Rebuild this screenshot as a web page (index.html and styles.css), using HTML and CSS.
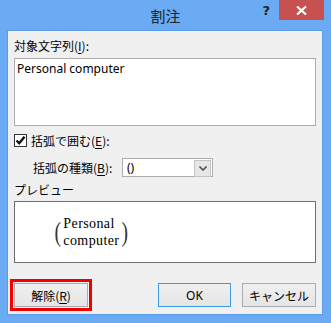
FILE: index.html
```html
<!DOCTYPE html>
<html lang="ja">
<head>
    <meta charset="UTF-8">
    <title>割注</title>
    <link rel="stylesheet" href="styles.css">
</head>
<body>
    <div class="window">
        <div class="titlebar">
            <div></div>
            <div class="title">割注</div>
            <div class="controls">
                <span class="help">?</span>
                <span class="close">
                    <svg width="11" height="9" viewBox="0 0 11 9"><path d="M1 0.5 L10 8.5 M10 0.5 L1 8.5" stroke="#fff" stroke-width="2.2"/></svg>
                </span>
            </div>
        </div>
        <div class="panel">
            <div class="label">対象文字列(<u>I</u>):</div>
            <div class="textbox">Personal computer</div>

            <div class="check-row">
                <span class="checkbox">
                    <svg width="11" height="11" viewBox="0 0 11 11"><path d="M1.5 5.5 L4.2 8.3 L9.5 1.8" fill="none" stroke="#111" stroke-width="2.4"/></svg>
                </span>
                <span>括弧で囲む(<u>E</u>):</span>
            </div>

            <div class="select-row">
                <span class="select-label">括弧の種類(<u>B</u>):</span>
                <div class="select">
                    <span class="select-value">()</span>
                    <span class="select-btn">
                        <svg width="8" height="5" viewBox="0 0 8 5"><path d="M0.5 0.5 L4 4 L7.5 0.5" fill="none" stroke="#555" stroke-width="1.6"/></svg>
                    </span>
                </div>
            </div>

            <div class="label preview-label">プレビュー</div>
            <div class="preview">
                <div class="warichu">
                    <span class="paren">(</span>
                    <div class="lines">
                        <div>Personal</div>
                        <div>computer</div>
                    </div>
                    <span class="paren">)</span>
                </div>
            </div>

            <div class="buttons">
                <button class="btn marked">解除(<u>R</u>)</button>
                <button class="btn default push">OK</button>
                <button class="btn">キャンセル</button>
            </div>
        </div>
    </div>
</body>
</html>
```

FILE: styles.css
```css
body {
    margin: 0;
    font-family: "Noto Sans", "Noto Sans CJK JP", sans-serif;
    font-size: 12px;
    color: #000;
}
.window {
    width: 331px;
    height: 323px;
    background-color: #6aabf3;
    display: flex;
    flex-direction: column;
    box-sizing: border-box;
}
.titlebar {
    height: 30px;
    display: grid;
    grid-template-columns: 1fr auto 1fr;
}
.title {
    font-family: "Noto Sans CJK JP", sans-serif;
    font-size: 15px;
    color: #222;
    line-height: 32px;
}
.controls {
    display: flex;
    justify-content: flex-end;
    align-items: flex-start;
    padding-right: 7px;
}
.help {
    font-family: "DejaVu Sans", sans-serif;
    font-weight: bold;
    font-size: 13px;
    color: #222;
    line-height: 22px;
    margin-right: 9px;
}
.close {
    width: 45px;
    height: 20px;
    background-color: #c75050;
    display: flex;
    align-items: center;
    justify-content: center;
}
.panel {
    margin: 0 8px 8px 7px;
    flex: 1;
    background-color: #f0f0f0;
    border: 1px solid #5b9ce6;
    padding: 6px 6px 0 6px;
    display: flex;
    flex-direction: column;
}
.label {
    font-family: "Noto Sans CJK JP", sans-serif;
    line-height: 18px;
    height: 18px;
    margin-bottom: 3px;
}
u {
    text-decoration-thickness: 1px;
    text-underline-offset: 2px;
}
.textbox {
    height: 64px;
    background: #fff;
    border: 1px solid #abadb3;
    padding: 1px 2px;
    line-height: 17px;
}
.check-row {
    display: flex;
    align-items: center;
    margin-top: 6px;
    height: 17px;
    font-family: "Noto Sans CJK JP", sans-serif;
}
.checkbox {
    width: 11px;
    height: 11px;
    border: 1px solid #333;
    background: #fff;
    margin-right: 4px;
    display: flex;
}
.select-row {
    display: flex;
    align-items: center;
    margin-top: 9px;
    padding-left: 19px;
    height: 19px;
    font-family: "Noto Sans CJK JP", sans-serif;
}
.select-label {
    width: 89px;
}
.select {
    width: 89px;
    height: 17px;
    border: 1px solid #abadb3;
    background: #fff;
    display: flex;
}
.select-value {
    flex: 1;
    padding-left: 4px;
    line-height: 17px;
    font-family: "Noto Sans", sans-serif;
}
.select-btn {
    width: 15px;
    height: 15px;
    margin: 1px;
    background: #e6e6e6;
    border: 1px solid #c4c4c4;
    box-sizing: content-box;
    display: flex;
    align-items: center;
    justify-content: center;
}
.preview-label {
    margin-top: 4px;
    height: 17px;
    line-height: 17px;
}
.preview {
    height: 47px;
    background: #fff;
    border: 1px solid #707070;
    padding: 13px 0 0 38px;
    box-sizing: content-box;
}
.warichu {
    display: flex;
    align-items: center;
    font-family: "Liberation Serif", serif;
}
.lines {
    font-size: 14px;
    line-height: 17px;
    letter-spacing: 0.4px;
    margin: 0 1px;
}
.paren {
    font-size: 28px;
    line-height: 32px;
    font-weight: 300;
    color: #333;
    transform: scaleX(0.7);
}
.buttons {
    display: flex;
    margin-top: 20px;
}
.btn {
    width: 74px;
    height: 24px;
    margin: 0;
    padding: 0;
    font-family: "Noto Sans CJK JP", sans-serif;
    font-size: 12px;
    color: #000;
    background: linear-gradient(#f0f0f0, #e5e5e5);
    border: 1px solid #acacac;
}
.btn + .btn {
    margin-left: 11px;
}
.push {
    margin-left: auto !important;
}
.default {
    width: 73px;
    border-color: #3c9be8;
    font-family: "Noto Sans", sans-serif;
}
.marked {
    outline: 3px solid #f20000;
    outline-offset: 1px;
    border-radius: 0;
}
```
